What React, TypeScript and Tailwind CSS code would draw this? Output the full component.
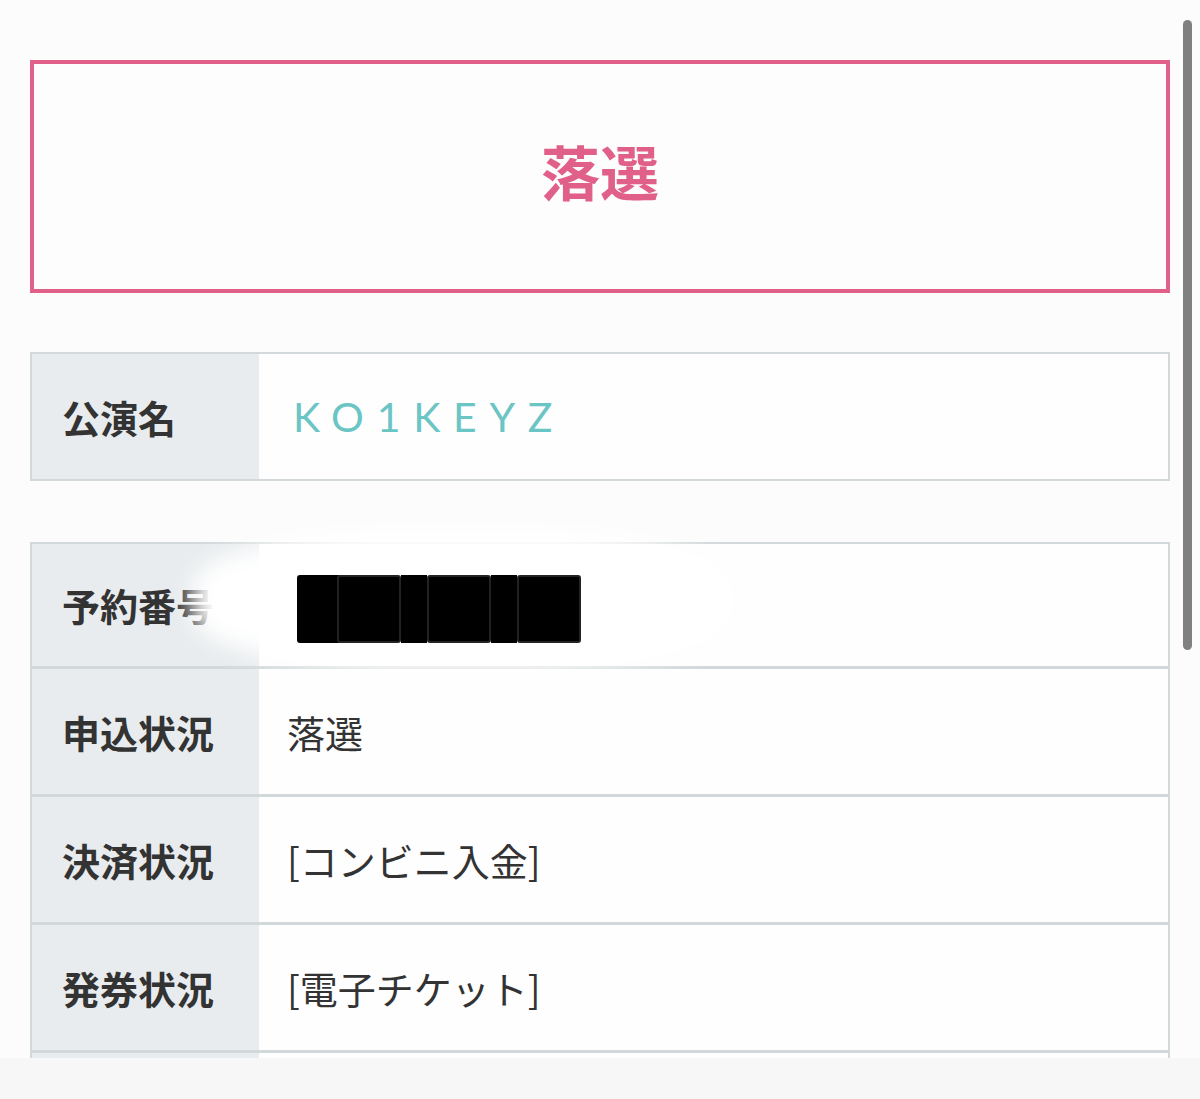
import React from 'react';

const jp = { fontFamily: '"Noto Sans CJK JP", "Noto Sans", sans-serif' };

const rows = [
  { label: '申込状況', value: '落選' },
  { label: '決済状況', value: '[コンビニ入金]' },
  { label: '発券状況', value: '[電子チケット]' },
];

export default function App() {
  return (
    <div className="relative w-[1200px] h-[1099px] overflow-hidden bg-[#fdfcfd]" style={jp}>
      <div className="px-[30px] pt-[60px]">
        {/* Result banner */}
        <div className="h-[233px] border-[4px] border-[#e0608a] bg-[#fefdfe] flex items-center justify-center">
          <span className="text-[59px] font-bold text-[#e0608a] leading-none -mt-[12px]">落選</span>
        </div>

        {/* Performance name */}
        <div className="mt-[59px] h-[129px] border-2 border-[#d3d8da] flex">
          <div className="w-[227px] bg-[#e8ecee] flex items-center pl-[30px]">
            <span className="text-[38px] font-bold text-[#333] leading-none">公演名</span>
          </div>
          <div className="flex-1 bg-[#fefeff] flex items-center pl-[34px]">
            <span
              className="text-[41px] text-[#6cc5c5] tracking-[0.31em] leading-none"
              style={{ fontFamily: 'Lato, "Noto Sans", sans-serif' }}
            >
              KO1KEYZ
            </span>
          </div>
        </div>

        {/* Detail table */}
        <div className="mt-[61px] border-x-2 border-t-2 border-[#d3d8da]">
          <div className="relative h-[125px] flex border-b-[3px] border-[#d3d8da]">
            <div className="w-[227px] bg-[#e8ecee] flex items-center pl-[30px]">
              <span className="text-[38px] font-bold text-[#333] leading-none">予約番号</span>
            </div>
            <div className="flex-1 bg-[#fefeff]" />
            {/* redaction smudge */}
            <div className="absolute left-[160px] top-[-14px] w-[540px] h-[140px] bg-white blur-md rounded-[40%]" />
            <div className="absolute left-[265px] top-[31px] flex items-stretch h-[68px]">
              <div className="w-[44px] bg-black rounded-[3px]" />
              <div className="w-[64px] bg-black rounded-[3px] -ml-[4px] border-2 border-[#222]" />
              <div className="w-[26px] bg-black" />
              <div className="w-[64px] bg-black rounded-[3px] border-2 border-[#222]" />
              <div className="w-[26px] bg-black" />
              <div className="w-[64px] bg-black rounded-[3px] border-2 border-[#222]" />
            </div>
          </div>
          {rows.map((r) => (
            <div key={r.label} className="h-[128px] flex border-b-[3px] border-[#d3d8da]">
              <div className="w-[227px] bg-[#e8ecee] flex items-center pl-[30px]">
                <span className="text-[38px] font-bold text-[#333] leading-none">{r.label}</span>
              </div>
              <div className="flex-1 bg-[#fefeff] flex items-center pl-[28px]">
                <span className="text-[38px] text-[#333] leading-none">{r.value}</span>
              </div>
            </div>
          ))}
          <div className="h-[40px] flex">
            <div className="w-[227px] bg-[#e8ecee]" />
            <div className="flex-1 bg-[#fefeff]" />
          </div>
        </div>
      </div>

      {/* scrollbar */}
      <div className="absolute left-[1183px] top-[20px] w-[9px] h-[630px] rounded-full bg-[#808080]" />

      {/* bottom bar */}
      <div className="absolute left-0 right-0 bottom-0 h-[41px] bg-[#f8f7f7]" />
    </div>
  );
}
